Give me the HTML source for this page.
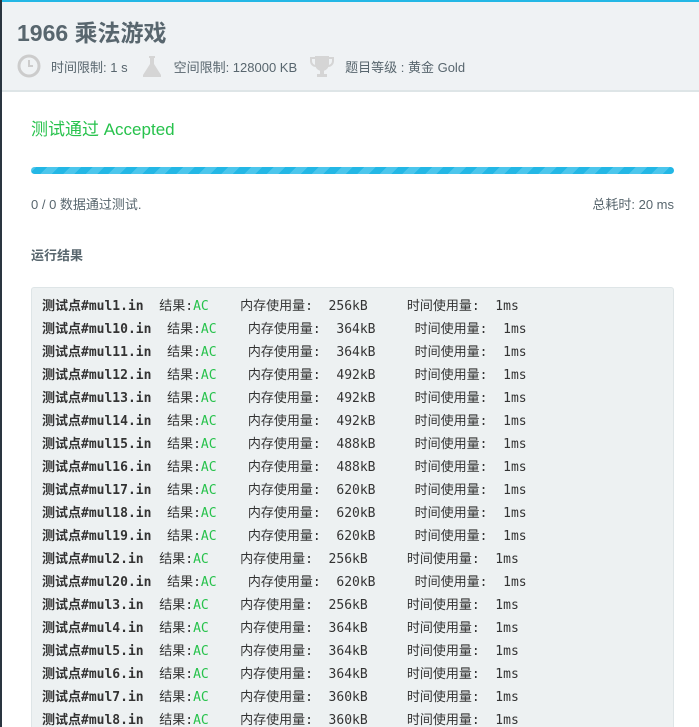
<!DOCTYPE html>
<html style="overflow:hidden;height:727px"><head><meta charset="utf-8"><style>
*{margin:0;padding:0;box-sizing:border-box}
body{width:699px;height:727px;overflow:hidden;background:#fff;font-family:"Liberation Sans","Noto Sans CJK SC",sans-serif;color:#58666e;position:relative}
.lb{position:absolute;left:0;top:0;width:2px;height:727px;background:#2a3540}
.tb{position:absolute;left:0;top:0;width:699px;height:2px;background:#23b7e5}
.head{position:absolute;left:2px;top:2px;width:697px;height:90px;background:#eff2f4;border-bottom:2px solid #dee5e7}
h1{position:absolute;left:15px;top:12px;font-size:23px;font-weight:bold;color:#58666e}
.meta{position:absolute;left:15px;top:52px;font-size:13px;color:#58666e;display:flex;align-items:center;height:24px}
.meta span{margin-right:12px}
.ic{margin-right:10px}
.acc{position:absolute;left:31px;top:115px;font-size:17px;color:#27c24c}
.bar{position:absolute;left:31px;top:167px;width:643px;height:7px;border-radius:4px;background:repeating-linear-gradient(-45deg,#23b7e5 0 8px,#4cc6ec 8px 16px)}
.l{position:absolute;left:31px;top:194px;font-size:13px}
.r{position:absolute;right:25px;top:194px;font-size:13px}
.rt{position:absolute;left:31px;top:245px;font-size:13px;font-weight:bold}
.box{position:absolute;left:31px;top:287px;width:643px;height:460px;background:#edf1f2;border:1px solid #dee5e7;border-radius:3px;padding:7px 10px}
pre{font-family:"DejaVu Sans Mono","Noto Sans CJK SC",monospace;font-size:13px;line-height:23px;color:#333;font-weight:bold}
pre b{font-weight:normal}
pre i{font-style:normal;font-weight:normal;color:#27c24c}
</style></head><body>
<div class="tb"></div>
<div class="head">
<h1>1966 乘法游戏</h1>
<div class="meta">
<svg class="ic" width="24" height="24" viewBox="0 0 24 24"><circle cx="12" cy="12" r="10" fill="none" stroke="#ccc" stroke-width="3"/><path d="M12 6v6h4" stroke="#ccc" stroke-width="2" fill="none"/></svg>
<span>时间限制: 1 s</span>
<svg class="ic" width="24" height="24" viewBox="0 0 24 24"><path d="M9 2h6v2h-1v6l7 11v2H3v-2l7-11V4H9z" fill="#d5d5d5"/></svg>
<span>空间限制: 128000 KB</span>
<svg class="ic" width="26" height="24" viewBox="0 0 26 24"><path d="M6 2h14v8a7 7 0 0 1-14 0z" fill="#d5d5d5"/><path d="M6 4H2v3a5 5 0 0 0 5 5M20 4h4v3a5 5 0 0 1-5 5" stroke="#d5d5d5" stroke-width="2" fill="none"/><rect x="11" y="16" width="4" height="4" fill="#d5d5d5"/><rect x="8" y="20" width="10" height="3" fill="#d5d5d5"/></svg>
<span>题目等级 : 黄金 Gold</span>
</div>
</div>
<div class="lb"></div>
<div class="acc">测试通过 Accepted</div>
<div class="bar"></div>
<div class="l">0 / 0 数据通过测试.</div>
<div class="r">总耗时: 20 ms</div>
<div class="rt">运行结果</div>
<div class="box"><pre>测试点#mul1.in  <b>结果:</b><i>AC</i>    <b>内存使用量:  256kB     时间使用量:  1ms</b>
测试点#mul10.in  <b>结果:</b><i>AC</i>    <b>内存使用量:  364kB     时间使用量:  1ms</b>
测试点#mul11.in  <b>结果:</b><i>AC</i>    <b>内存使用量:  364kB     时间使用量:  1ms</b>
测试点#mul12.in  <b>结果:</b><i>AC</i>    <b>内存使用量:  492kB     时间使用量:  1ms</b>
测试点#mul13.in  <b>结果:</b><i>AC</i>    <b>内存使用量:  492kB     时间使用量:  1ms</b>
测试点#mul14.in  <b>结果:</b><i>AC</i>    <b>内存使用量:  492kB     时间使用量:  1ms</b>
测试点#mul15.in  <b>结果:</b><i>AC</i>    <b>内存使用量:  488kB     时间使用量:  1ms</b>
测试点#mul16.in  <b>结果:</b><i>AC</i>    <b>内存使用量:  488kB     时间使用量:  1ms</b>
测试点#mul17.in  <b>结果:</b><i>AC</i>    <b>内存使用量:  620kB     时间使用量:  1ms</b>
测试点#mul18.in  <b>结果:</b><i>AC</i>    <b>内存使用量:  620kB     时间使用量:  1ms</b>
测试点#mul19.in  <b>结果:</b><i>AC</i>    <b>内存使用量:  620kB     时间使用量:  1ms</b>
测试点#mul2.in  <b>结果:</b><i>AC</i>    <b>内存使用量:  256kB     时间使用量:  1ms</b>
测试点#mul20.in  <b>结果:</b><i>AC</i>    <b>内存使用量:  620kB     时间使用量:  1ms</b>
测试点#mul3.in  <b>结果:</b><i>AC</i>    <b>内存使用量:  256kB     时间使用量:  1ms</b>
测试点#mul4.in  <b>结果:</b><i>AC</i>    <b>内存使用量:  364kB     时间使用量:  1ms</b>
测试点#mul5.in  <b>结果:</b><i>AC</i>    <b>内存使用量:  364kB     时间使用量:  1ms</b>
测试点#mul6.in  <b>结果:</b><i>AC</i>    <b>内存使用量:  364kB     时间使用量:  1ms</b>
测试点#mul7.in  <b>结果:</b><i>AC</i>    <b>内存使用量:  360kB     时间使用量:  1ms</b>
测试点#mul8.in  <b>结果:</b><i>AC</i>    <b>内存使用量:  360kB     时间使用量:  1ms</b></pre></div>
</body></html>
